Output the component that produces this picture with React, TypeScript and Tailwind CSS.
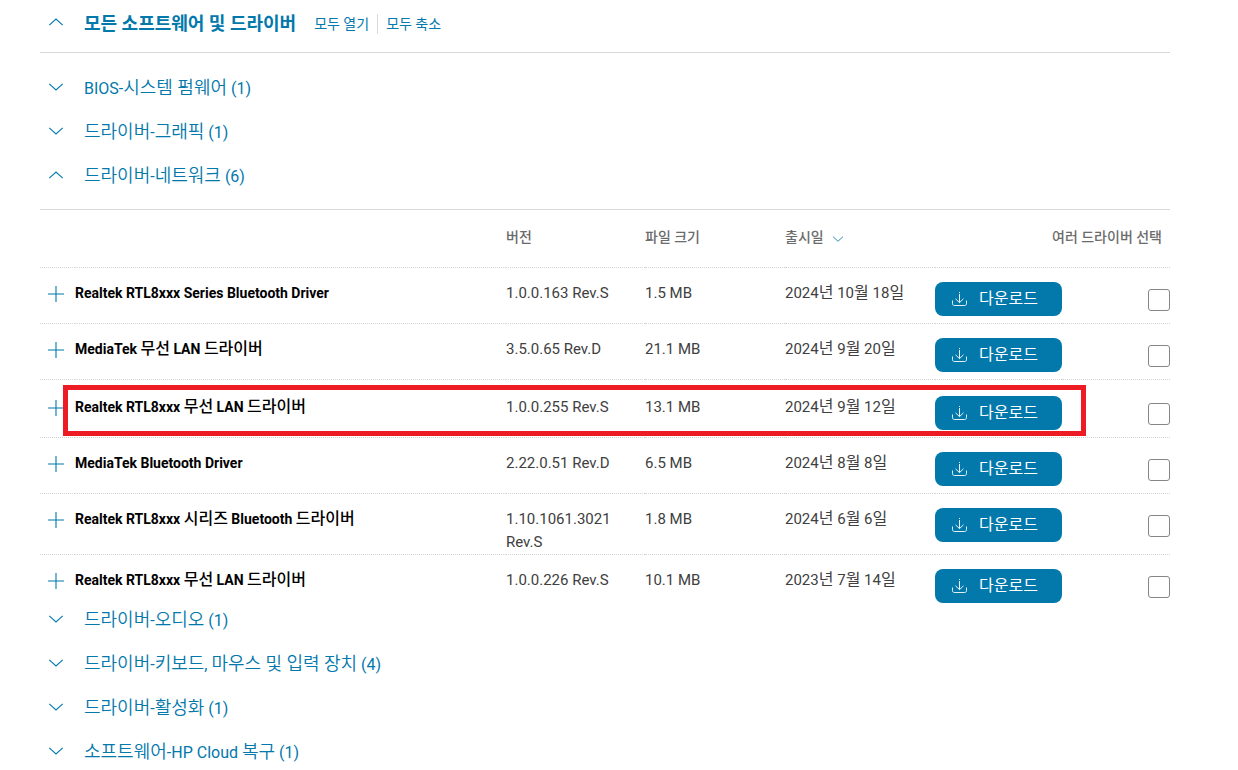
import { useState } from "react";
import clsx from "clsx";

type Driver = {
  name: string;
  version: string;
  size: string;
  date: string;
  highlighted?: boolean;
};

const drivers: Driver[] = [
  { name: "Realtek RTL8xxx Series Bluetooth Driver", version: "1.0.0.163 Rev.S", size: "1.5 MB", date: "2024년 10월 18일" },
  { name: "MediaTek 무선 LAN 드라이버", version: "3.5.0.65 Rev.D", size: "21.1 MB", date: "2024년 9월 20일" },
  { name: "Realtek RTL8xxx 무선 LAN 드라이버", version: "1.0.0.255 Rev.S", size: "13.1 MB", date: "2024년 9월 12일", highlighted: true },
  { name: "MediaTek Bluetooth Driver", version: "2.22.0.51 Rev.D", size: "6.5 MB", date: "2024년 8월 8일" },
  { name: "Realtek RTL8xxx 시리즈 Bluetooth 드라이버", version: "1.10.1061.3021 Rev.S", size: "1.8 MB", date: "2024년 6월 6일" },
  { name: "Realtek RTL8xxx 무선 LAN 드라이버", version: "1.0.0.226 Rev.S", size: "10.1 MB", date: "2023년 7월 14일" },
];

// 한글 부분만 별도 크기·굵기로 표시
const MixedText = ({ text, hangul }: { text: string; hangul: string }) => (
  <span>
    {text.split(/([가-힣]+(?: [가-힣]+)*)/).map((part, i) =>
      i % 2 ? (
        <span key={i} className={clsx("leading-none", hangul)}>
          {part}
        </span>
      ) : (
        part
      ),
    )}
  </span>
);

const Chevron = ({ up = false, className = "mb-1 h-2 w-4" }: { up?: boolean; className?: string }) => (
  <svg viewBox="0 0 16 8" className={clsx("shrink-0", className)} fill="none" stroke="currentColor" strokeWidth="1.1" aria-hidden="true">
    <path d={up ? "M1.3 7.2 8 1l6.7 6.2" : "M1.3.8 8 7l6.7-6.2"} />
  </svg>
);

const PlusIcon = () => (
  <svg viewBox="0 0 16 16" className="h-4 w-4" fill="none" stroke="#0278ab" strokeWidth="1.1" aria-hidden="true">
    <path d="M8 0v16M0 8h16" />
  </svg>
);

const DownloadIcon = () => (
  <svg viewBox="0 0 16 16" className="h-4 w-4" fill="none" stroke="currentColor" strokeWidth="0.9" aria-hidden="true">
    <path d="M8.5 1v1M8.5 3v8.5M4.5 7.8l4 3.8 4-3.8" />
    <path d="M1.5 9.5v3.2c0 1.1.7 1.8 1.8 1.8h10.4c1.1 0 1.8-.7 1.8-1.8V9.5" />
  </svg>
);

const Category = ({ label, open = false }: { label: string; open?: boolean }) => (
  <button
    aria-expanded={open}
    className="mb-5 flex h-6 items-center gap-5 pl-2 text-base leading-6 text-[#0278ab]"
  >
    <Chevron up={open} />
    <MixedText text={label} hangul="text-lg font-[350]" />
  </button>
);

const DriverRow = ({ driver, last }: { driver: Driver; last: boolean }) => {
  const [checked, setChecked] = useState(false);
  const { name, version, size, date, highlighted } = driver;

  return (
    <tr
      className={clsx(
        "relative align-top text-[15px] leading-[23px] text-[#404040]",
        highlighted ? "h-[58px] [&>td]:pt-4" : "[&>td]:pt-[14px]",
        !last && "[&>td]:border-b [&>td]:border-dotted [&>td]:border-[#d4d4d4]",
        !last && !highlighted && "h-14",
      )}
    >
      <td className="pl-2">
        <button aria-label={`${name} 상세 정보`} className="block pt-1">
          <PlusIcon />
        </button>
      </td>
      <td className="text-sm leading-[23px] font-bold text-black">
        <MixedText text={name} hangul="text-base font-medium" />
      </td>
      <td className="pr-6">{version}</td>
      <td>{size}</td>
      <td>
        <MixedText text={date} hangul="text-base" />
      </td>
      <td>
        <button className="flex h-[34px] w-[127px] items-center gap-3 rounded-lg bg-[#0278ab] pl-4 text-base text-white">
          <DownloadIcon />
          다운로드
        </button>
      </td>
      <td>
        <input
          type="checkbox"
          aria-label={`${name} 선택`}
          checked={checked}
          onChange={(e) => setChecked(e.target.checked)}
          className="mt-[7px] ml-auto block h-[22px] w-[22px] appearance-none rounded-[3px] border border-[#868686] bg-white checked:bg-[#0278ab]"
        />
        {/* 강조 테두리 */}
        {highlighted && (
          <div className="pointer-events-none absolute top-[5px] right-[84px] bottom-0.5 left-[23px] border-[5px] border-[#ed1c24]" />
        )}
      </td>
    </tr>
  );
};

const App = () => {
  return (
    <main className="bg-white pr-[68px] pl-10 font-[Roboto,'Noto_Sans_CJK_KR',sans-serif]">
      <header className="flex h-[53px] items-center border-b border-[#d9d9d9] pb-1 pl-2 text-[#0278ab]">
        <button aria-expanded="true" className="flex items-center gap-5">
          <Chevron up />
          <h2 className="text-lg font-bold">모든 소프트웨어 및 드라이버</h2>
        </button>
        <div className="flex items-center pl-[18px] text-sm leading-5">
          <button className="border-r border-[#d9d9d9] pr-2">모두 열기</button>
          <button className="pl-2">모두 축소</button>
        </div>
      </header>

      <section className="flex flex-col items-start pt-6">
        <Category label="BIOS-시스템 펌웨어 (1)" />
        <Category label="드라이버-그래픽 (1)" />
        <Category label="드라이버-네트워크 (6)" open />

        <table className="mb-1.5 w-full table-fixed border-separate border-spacing-0">
          <colgroup>
            <col className="w-[35px]" />
            <col />
            <col className="w-[139px]" />
            <col className="w-[140px]" />
            <col className="w-[150px]" />
            <col className="w-[127px]" />
            <col className="w-[108px]" />
          </colgroup>
          <thead>
            <tr className="h-[59px] text-left align-top text-sm leading-6 text-[#6b6b6b] [&>*]:border-t [&>*]:border-b [&>*]:border-t-[#d9d9d9] [&>*]:border-b-[#d4d4d4] [&>*]:[border-bottom-style:dotted] [&>*]:pt-[15px] [&>*]:font-medium">
              <td />
              <td />
              <th scope="col">버전</th>
              <th scope="col">파일 크기</th>
              <th scope="col">
                <button className="flex items-center gap-2">
                  출시일
                  <Chevron className="mt-1 h-1.5 w-3 text-[#0278ab]" />
                </button>
              </th>
              <th scope="col" colSpan={2} className="pr-2 text-right">
                여러 드라이버 선택
              </th>
            </tr>
          </thead>
          <tbody>
            {drivers.map((driver, i) => (
              <DriverRow key={driver.version} driver={driver} last={i === drivers.length - 1} />
            ))}
          </tbody>
        </table>

        <Category label="드라이버-오디오 (1)" />
        <Category label="드라이버-키보드, 마우스 및 입력 장치 (4)" />
        <Category label="드라이버-활성화 (1)" />
        <Category label="소프트웨어-HP Cloud 복구 (1)" />
      </section>
    </main>
  );
};

export default App;
